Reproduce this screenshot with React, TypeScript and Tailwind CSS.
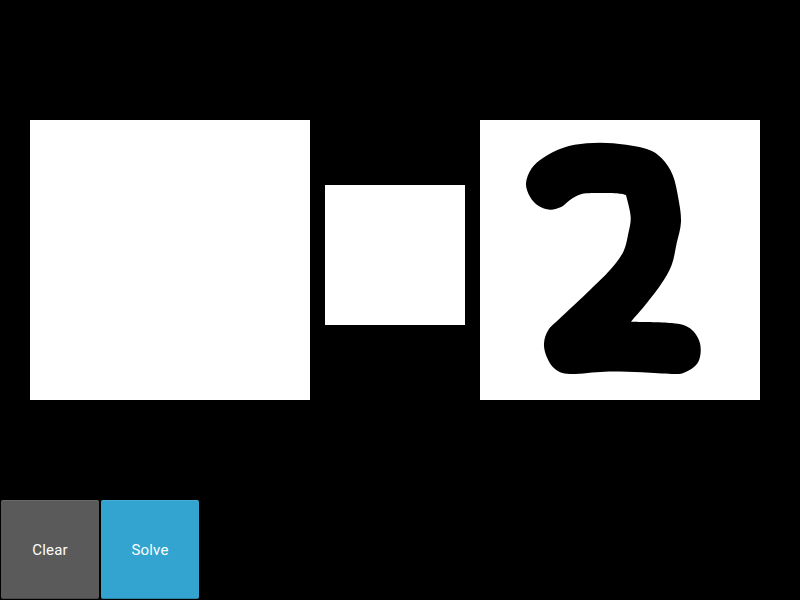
// outline of the hand drawn 2, traced from the canvas (840 units = 280px). The third value marks a sharp corner
const TWO_POINTS: [number, number, number?][] = [
  [138, 190], [155, 145], [190, 113], [250, 83], [320, 70], [400, 70], [500, 87], [545, 115],
  [578, 165], [595, 235], [603, 305], [590, 370], [575, 435], [545, 490], [500, 550], [453, 605, 1],
  [575, 609], [630, 625], [660, 670], [655, 725], [615, 757], [575, 762], [485, 757], [375, 755],
  [270, 762], [225, 747], [200, 710], [192, 670], [205, 630], [240, 595], [330, 510], [390, 450],
  [430, 395], [445, 340], [452, 290], [438, 225, 1], [420, 221], [365, 219], [305, 222], [270, 240],
  [245, 260], [210, 269], [175, 257], [150, 230],
];

function outlineToPath(points: [number, number, number?][]) {
  const n = points.length;
  let d = `M${points[0][0]} ${points[0][1]}`;
  for (let i = 0; i < n; i++) {
    const p1 = points[i];
    const p2 = points[(i + 1) % n];
    const p0 = p1[2] ? p1 : points[(i - 1 + n) % n];
    const p3 = p2[2] ? p2 : points[(i + 2) % n];
    const c1x = p1[0] + (p2[0] - p0[0]) / 6;
    const c1y = p1[1] + (p2[1] - p0[1]) / 6;
    const c2x = p2[0] - (p3[0] - p1[0]) / 6;
    const c2y = p2[1] - (p3[1] - p1[1]) / 6;
    d += ` C${c1x} ${c1y} ${c2x} ${c2y} ${p2[0]} ${p2[1]}`;
  }
  return d + " Z";
}

export default function App() {
  return (
    <div className="flex h-screen flex-col justify-between overflow-hidden bg-black font-['Roboto',sans-serif]">
      <div className="flex items-center gap-[15px] pl-[30px] pt-[120px]">
        <div className="h-[280px] w-[280px] bg-white" />
        <div className="mb-[10px] h-[140px] w-[140px] bg-white" />
        <div className="h-[280px] w-[280px] bg-white">
          <svg viewBox="0 0 840 840" className="block h-full w-full">
            <path d={outlineToPath(TWO_POINTS)} fill="#000" />
          </svg>
        </div>
      </div>

      <div className="flex gap-0.5 px-px pb-px">
        <button className="h-[99px] w-[98px] rounded-[2px] bg-[#5a5a5a] pt-0.5 text-[15px] tracking-[0.2px] text-white shadow-[inset_0_1px_0_rgba(255,255,255,0.1),inset_0_-1px_0_rgba(0,0,0,0.2)]">
          Clear
        </button>
        <button className="h-[99px] w-[98px] rounded-[2px] bg-[#32a4cf] pt-0.5 text-[15px] tracking-[0.2px] text-white shadow-[inset_0_1px_0_rgba(255,255,255,0.1),inset_0_-1px_0_rgba(0,0,0,0.2)]">
          Solve
        </button>
      </div>
    </div>
  );
}
